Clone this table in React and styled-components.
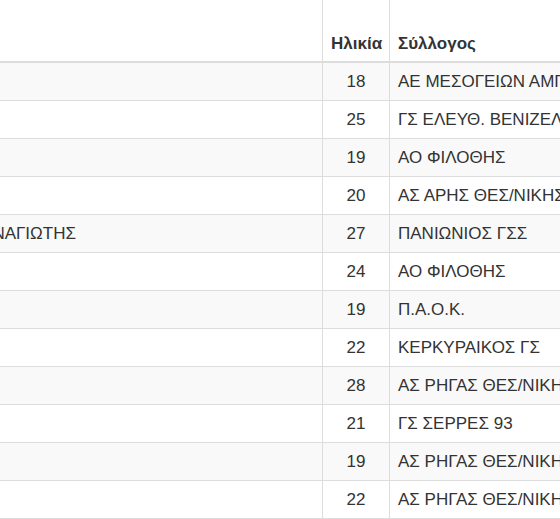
import React from "react";
import styled, { createGlobalStyle } from "styled-components";

const Global = createGlobalStyle`
  html, body { margin: 0; padding: 0; background: #fff; }
  body {
    font-family: "Liberation Sans", Arial, Helvetica, sans-serif;
    font-size: 17px;
    color: #333;
  }
`;

const Viewport = styled.div`
  width: 560px;
  height: 519px;
  overflow: hidden;
`;

const Table = styled.table`
  border-collapse: collapse;
  table-layout: fixed;
  width: 912px;
  margin-left: -122px;
  background: transparent;
`;

const HeadCell = styled.th`
  height: 62px;
  box-sizing: border-box;
  padding: 8px 8px 7px;
  line-height: 21px;
  font-weight: bold;
  text-align: ${(p) => p.$align || "left"};
  vertical-align: bottom;
  white-space: nowrap;
  border-left: 1px solid #ddd;
  border-right: 1px solid #ddd;
  border-bottom: 2px solid #ddd;
`;

const Row = styled.tr`
  background: ${(p) => (p.$striped ? "#f9f9f9" : "#fff")};
`;

const Cell = styled.td`
  padding: 8px;
  line-height: 21px;
  text-align: ${(p) => p.$align || "left"};
  vertical-align: top;
  white-space: nowrap;
  overflow: hidden;
  border: 1px solid #ddd;
`;

const rows = [
  ["ΝΙΚΟΛΑΟΣ", 18, "ΑΕ ΜΕΣΟΓΕΙΩΝ ΑΜΠΕΛΟΚΗΠΩΝ"],
  ["ΓΕΩΡΓΙΟΣ", 25, "ΓΣ ΕΛΕΥΘ. ΒΕΝΙΖΕΛΟΣ"],
  ["ΙΩΑΝΝΗΣ", 19, "ΑΟ ΦΙΛΟΘΗΣ"],
  ["ΝΙΚΟΛΑΟΣ", 20, "ΑΣ ΑΡΗΣ ΘΕΣ/ΝΙΚΗΣ"],
  ["ΙΩΑΝΝΗΣ-ΠΑΝΑΓΙΩΤΗΣ", 27, "ΠΑΝΙΩΝΙΟΣ ΓΣΣ"],
  ["ΓΕΩΡΓΙΟΣ", 24, "ΑΟ ΦΙΛΟΘΗΣ"],
  ["ΧΡΗΣΤΟΣ", 19, "Π.Α.Ο.Κ."],
  ["ΣΠΥΡΙΔΩΝ", 22, "ΚΕΡΚΥΡΑΙΚΟΣ ΓΣ"],
  ["ΑΘΑΝΑΣΙΟΣ", 28, "ΑΣ ΡΗΓΑΣ ΘΕΣ/ΝΙΚΗΣ"],
  ["ΙΩΑΝΝΗΣ", 21, "ΓΣ ΣΕΡΡΕΣ 93"],
  ["ΣΤΑΥΡΟΣ", 19, "ΑΣ ΡΗΓΑΣ ΘΕΣ/ΝΙΚΗΣ"],
  ["ΝΙΚΟΛΑΟΣ", 22, "ΑΣ ΡΗΓΑΣ ΘΕΣ/ΝΙΚΗΣ"],
];

export default function App() {
  return (
    <Viewport>
      <Global />
      <Table>
        <colgroup>
          <col style={{ width: 444 }} />
          <col style={{ width: 67 }} />
          <col style={{ width: 401 }} />
        </colgroup>
        <thead>
          <tr>
            <HeadCell>Όνομα</HeadCell>
            <HeadCell $align="center">Ηλικία</HeadCell>
            <HeadCell>Σύλλογος</HeadCell>
          </tr>
        </thead>
        <tbody>
          {rows.map(([name, age, club], i) => (
            <Row key={i} $striped={i % 2 === 0}>
              <Cell>{name}</Cell>
              <Cell $align="center">{age}</Cell>
              <Cell>{club}</Cell>
            </Row>
          ))}
        </tbody>
      </Table>
    </Viewport>
  );
}
